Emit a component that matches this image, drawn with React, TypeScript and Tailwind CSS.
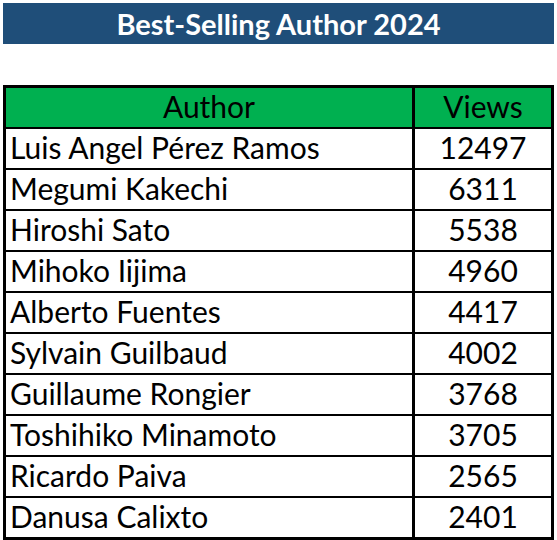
const rows: [string, number][] = [
  ["Luis Angel Pérez Ramos", 12497],
  ["Megumi Kakechi", 6311],
  ["Hiroshi Sato", 5538],
  ["Mihoko Iijima", 4960],
  ["Alberto Fuentes", 4417],
  ["Sylvain Guilbaud", 4002],
  ["Guillaume Rongier", 3768],
  ["Toshihiko Minamoto", 3705],
  ["Ricardo Paiva", 2565],
  ["Danusa Calixto", 2401],
]

export default function App() {
  return (
    <div className="w-[557px] h-[540px] bg-white p-[3px] font-['Lato','Open_Sans',sans-serif] text-black">
      <div className="h-[41px] bg-[#1f4e79] flex items-center justify-center">
        <h1 className="text-white font-bold text-[29px] leading-none">Best-Selling Author 2024</h1>
      </div>
      <div className="mt-[41px] border-[3px] border-black">
        <div className="h-[39px] bg-[#00b050] grid grid-cols-[409px_1fr] text-[30px] leading-none">
          <div className="flex items-center justify-center pb-[3px] border-r-[3px] border-black">Author</div>
          <div className="flex items-center justify-center pb-[3px]">Views</div>
        </div>
        {rows.map(([name, views]) => (
          <div key={name} className="h-[41px] grid grid-cols-[409px_1fr] border-t-2 border-black text-[30px] leading-none">
            <div className="flex items-center pl-[4px] pb-[3px] border-r-[3px] border-black">{name}</div>
            <div className="flex items-center justify-center pb-[3px]">{views}</div>
          </div>
        ))}
      </div>
    </div>
  )
}
